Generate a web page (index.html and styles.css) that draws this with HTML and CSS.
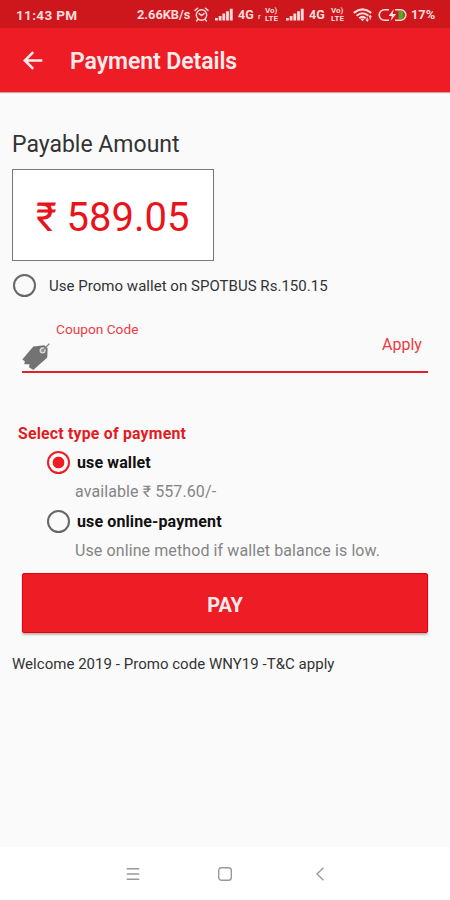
FILE: index.html
```html
<!DOCTYPE html>
<html lang="en">
<head>
  <meta charset="UTF-8">
  <meta name="viewport" content="width=device-width, initial-scale=1.0">
  <title>Payment Details</title>
  <link rel="stylesheet" href="styles.css">
</head>
<body>
  <div class="status-bar">
    <span class="time">11:43 PM</span>
    <span class="speed">2.66KB/s</span>
    <svg class="alarm" width="15" height="15" viewBox="0 0 15 15" fill="none" stroke="currentColor" stroke-width="1.4" stroke-linecap="round">
      <circle cx="7.5" cy="8" r="5.2"/>
      <path d="M1 3.4 3.6 1.2M14 3.4 11.4 1.2M3.8 12.4 2.6 14M11.2 12.4 12.4 14M5.2 6.6 7.5 8.6 10 6.6"/>
    </svg>
    <svg class="signal" width="18" height="13" viewBox="0 0 18 13" fill="currentColor">
      <path d="M0 10h2.8v2.5H0zM3.7 8h2.8v4.5H3.7zM7.4 5.6h2.8v6.9H7.4zM11.1 3.2h2.8v9.3h-2.8zM14.8.8h2.9v11.7h-2.9z"/>
    </svg>
    <span class="network">4G</span>
    <span class="tick">r</span>
    <span class="volte"><span>Vo)</span><span>LTE</span></span>
    <svg class="signal second" width="18" height="13" viewBox="0 0 18 13" fill="currentColor">
      <path d="M0 10h2.8v2.5H0zM3.7 8h2.8v4.5H3.7zM7.4 5.6h2.8v6.9H7.4zM11.1 3.2h2.8v9.3h-2.8zM14.8.8h2.9v11.7h-2.9z"/>
    </svg>
    <span class="network">4G</span>
    <span class="volte second"><span>Vo)</span><span>LTE</span></span>
    <svg class="wifi" width="20" height="14" viewBox="0 0 20 14" fill="none" stroke="currentColor" stroke-width="2.1">
      <path d="M.8 4.8Q9.5-2 18.2 4.8M3.6 7.7Q9.5 2.8 15.4 7.7M6.3 10.2Q9.5 7.4 12.7 10.2"/>
      <path d="M9.5 13.2 7.6 11.2Q9.5 9.8 11.4 11.2z" fill="currentColor" stroke="none"/>
      <path d="M14.2 13V9.5M17.2 7.8v3.6M13 11.5l1.2 1.5 1.2-1.5M16 9.2l1.2-1.5 1.2 1.5" stroke-width="1.1"/>
    </svg>
    <svg class="battery" width="29" height="14" viewBox="0 0 29 14">
      <path d="M11 1.7H6.5a5.3 5.3 0 0 0 0 10.6H11M17 1.7h5.5a5.3 5.3 0 0 1 0 10.6H17" fill="none" stroke="currentColor" stroke-width="1.6"/>
      <path d="M20.5 3h3a2 2 0 0 1 2 2v4a2 2 0 0 1-2 2h-3z" fill="#4fae1b"/>
      <path d="M15.8 1 10.6 7.9h3.3L12.6 13l5.6-7.1h-3.6z" fill="currentColor"/>
    </svg>
    <span class="percent">17%</span>
  </div>

  <header class="app-bar">
    <svg class="back" width="20" height="20" viewBox="0 0 20 20" fill="none" stroke="currentColor" stroke-width="2.5">
      <path d="M19.3 9.5H2M10.2 1.1 1.8 9.5l8.4 8.4"/>
    </svg>
    <h1>Payment Details</h1>
  </header>

  <main class="content">
    <h2>Payable Amount</h2>
    <div class="amount">₹ 589.05</div>

    <div class="promo">
      <span class="radio"></span>
      <span class="promo-text">Use Promo wallet on SPOTBUS Rs.150.15</span>
    </div>

    <div class="coupon">
      <svg class="tag" width="28" height="28" viewBox="0 0 28 28">
        <path d="M.3 16.5 11.3 3.4 22.3 2.3 25.6 5.3 25.3 14.6 11.3 27 7 24.3 7.6 21.3 2.3 21.3 2.8 18.2z" fill="#737373"/>
        <circle cx="20.6" cy="7.4" r="2.4" fill="#999" stroke="#ddd" stroke-width="1.3"/>
        <path d="M20.8 7.2 27.3.8" stroke="#858585" stroke-width="1.2"/>
      </svg>
      <span class="coupon-label">Coupon Code</span>
      <span class="apply">Apply</span>
    </div>

    <h3>Select type of payment</h3>
    <div class="option">
      <span class="radio checked"></span>
      <span class="option-name">use wallet</span>
    </div>
    <p class="hint">available ₹ 557.60/-</p>
    <div class="option">
      <span class="radio"></span>
      <span class="option-name">use online-payment</span>
    </div>
    <p class="hint">Use online method if wallet balance is low.</p>

    <button class="pay">PAY</button>
    <p class="note">Welcome 2019 - Promo code WNY19 -T&amp;C apply</p>
  </main>

  <nav class="nav-bar">
    <svg width="14" height="14" viewBox="0 0 14 14" stroke="currentColor" stroke-width="1.4">
      <path d="M.7 1.7h12.6M.7 7h12.6M.7 12.3h12.6"/>
    </svg>
    <svg class="home" width="16" height="16" viewBox="0 0 16 16" fill="none" stroke="currentColor" stroke-width="1.4">
      <rect x="1.7" y="1.7" width="12.6" height="12.6" rx="2.8"/>
    </svg>
    <svg width="10" height="14" viewBox="0 0 10 14" fill="none" stroke="currentColor" stroke-width="1.4">
      <path d="M8.5.8 2 7l6.5 6.2"/>
    </svg>
  </nav>
</body>
</html>
```
FILE: styles.css
```css
* {
  box-sizing: border-box;
}
body {
  margin: 0;
  height: 900px;
  display: flex;
  flex-direction: column;
  font-family: Roboto, 'Noto Sans', sans-serif;
  background: #fafafa;
  color: #333;
  overflow: hidden;
}
h1, h2, h3, p {
  margin: 0;
}
span, h1, h2, h3, p, .amount {
  white-space: nowrap;
}
.status-bar {
  height: 28px;
  padding: 1px 14px 0 16px;
  display: flex;
  align-items: center;
  background: #cd171c;
  color: #ffdcdc;
  font-size: 13px;
  font-weight: 700;
}
.status-bar svg {
  flex: none;
}
.time {
  width: 121px;
  font-size: 13.5px;
  letter-spacing: 0.35px;
}
.speed {
  width: 57px;
  font-size: 12.8px;
}
.alarm {
  margin-right: 6px;
}
.signal {
  margin-right: 5px;
}
.network {
  width: 17px;
  font-size: 12.5px;
}
.tick {
  width: 10px;
  padding: 4px 0 0 3px;
  font-size: 7px;
}
.volte {
  width: 21px;
  display: flex;
  flex-direction: column;
  font-size: 8px;
  line-height: 8px;
}
.volte.second {
  width: 22px;
  margin-left: 5px;
}
.wifi {
  margin-right: 5px;
}
.battery {
  margin-right: 4px;
}
.percent {
  width: 25px;
  font-size: 12.8px;
}
.app-bar {
  height: 64px;
  padding: 1px 23px 0;
  display: flex;
  align-items: center;
  background: #ee1c25;
  color: #ffebeb;
  box-shadow: 0 1px 1px #d8a0a0;
}
.back {
  margin-right: 27px;
}
h1 {
  padding-top: 2px;
  font-size: 23px;
  font-weight: 600;
  letter-spacing: -0.07px;
}
.content {
  flex: 1;
  padding: 37px 0 0 12px;
}
h2 {
  height: 40px;
  line-height: 31px;
  font-size: 23px;
  font-weight: 400;
}
.amount {
  width: 202px;
  height: 92px;
  padding-left: 23px;
  line-height: 95px;
  border: 1px solid #777;
  background: #fff;
  color: #e8141c;
  font-size: 40px;
}
.promo {
  height: 48px;
  display: flex;
  align-items: center;
}
.radio {
  flex: none;
  width: 23px;
  height: 23px;
  margin-left: 1px;
  border: 2px solid #666;
  border-radius: 50%;
}
.radio.checked {
  border-color: #ee1c25;
  background: radial-gradient(circle, #ee1c25 5.5px, transparent 6.2px);
}
.promo-text {
  margin-left: 13px;
  padding-top: 2px;
  font-size: 15px;
  letter-spacing: 0.03px;
}
.coupon {
  width: 406px;
  height: 64px;
  margin-left: 10px;
  display: flex;
  border-bottom: 2px solid #e2202a;
  color: #ee3a44;
}
.tag {
  margin-top: 34px;
}
.coupon-label {
  width: 332px;
  padding: 12px 0 0 6px;
  font-size: 13.7px;
}
.apply {
  padding-top: 26px;
  font-size: 16px;
}
h3 {
  margin: 51px 0 5px 6px;
  line-height: 20px;
  font-size: 15.8px;
  font-weight: 700;
  letter-spacing: 0.22px;
  color: #e31b23;
}
.option {
  height: 26px;
  padding-left: 34px;
  display: flex;
  align-items: center;
}
.option-name {
  margin-left: 7px;
  font-size: 16px;
  font-weight: 700;
  letter-spacing: 0.12px;
  color: #111;
}
.hint {
  height: 33px;
  padding-left: 63px;
  line-height: 34px;
  font-size: 16px;
  letter-spacing: 0.1px;
  color: #858585;
}
.pay {
  display: block;
  width: 406px;
  height: 60px;
  margin: 6px 0 0 10px;
  padding-top: 4px;
  border: 1px solid #e0000a;
  border-radius: 2px;
  background: #ee1c25;
  color: #ffebeb;
  font-family: inherit;
  font-size: 20px;
  font-weight: 700;
  letter-spacing: -0.1px;
  box-shadow: 0 2px 2px #bbb;
}
.note {
  margin-top: 21px;
  line-height: 20px;
  font-size: 15px;
  letter-spacing: 0.03px;
}
.nav-bar {
  height: 53px;
  padding: 0 125px 0 126px;
  display: flex;
  align-items: center;
  justify-content: space-between;
  background: #fff;
  color: #999;
}
.home {
  margin-right: 5px;
}
```
